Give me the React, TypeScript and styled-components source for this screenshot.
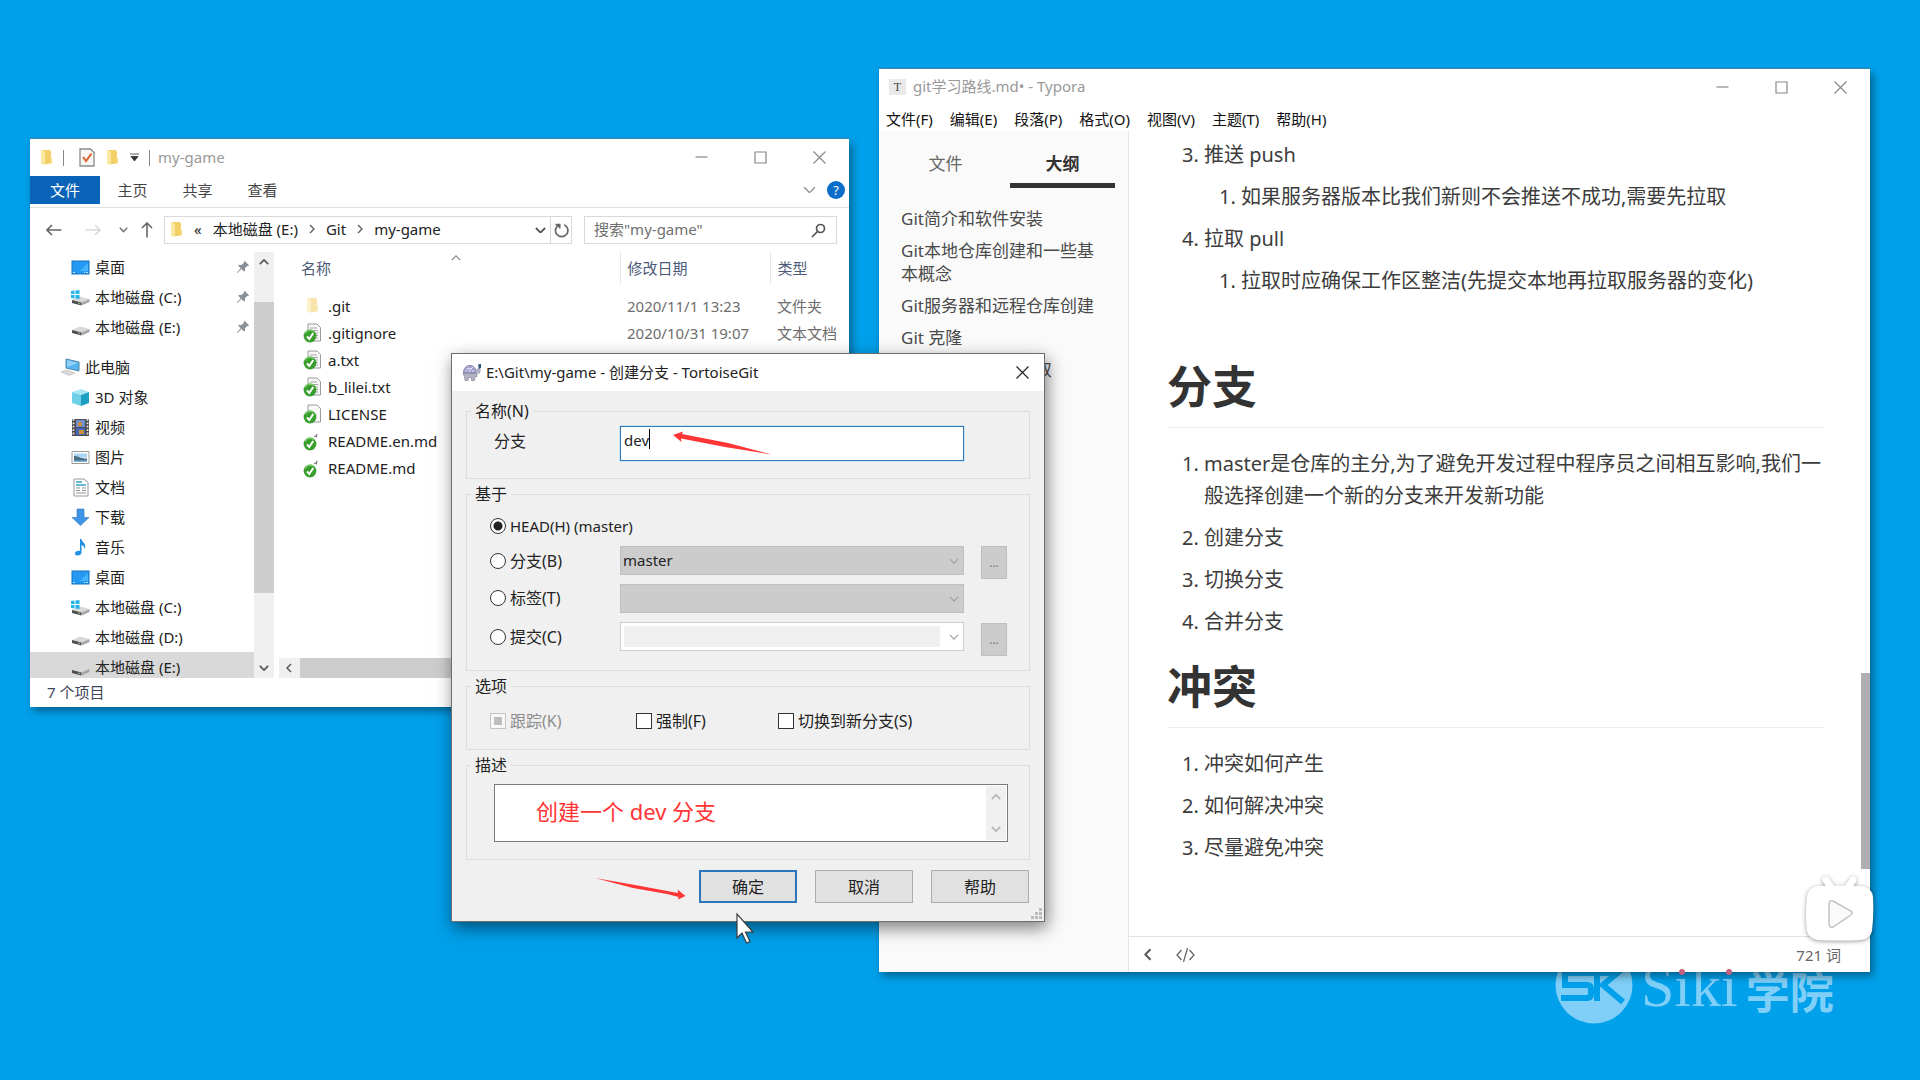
import React from "react";
import styled, { createGlobalStyle, css } from "styled-components";

const GlobalStyle = createGlobalStyle`
  *, *::before, *::after { box-sizing: border-box; }
  body { margin: 0; background: #00a0ea; }
  body, button, input, select, textarea {
    font-family: "Noto Sans", "Noto Sans CJK SC", sans-serif;
  }
  button { border: 0; padding: 0; background: none; color: inherit; }
  ul, ol, h1 { margin: 0; padding: 0; }
  a { color: inherit; text-decoration: none; }
`;

/* ---------- desktop ---------- */

const Desktop = styled.main`
  position: relative;
  min-height: 100vh;
  overflow: hidden;
  background: #00a0ea;
  font-size: 15px;
  line-height: 24px;
  color: #222;
`;

const Window = styled.section`
  position: absolute;
  display: flex;
  flex-direction: column;
  background: #fff;
  box-shadow: 0 -1px 0 #3b86ad, 3px 4px 8px rgba(0, 0, 0, 0.4);
`;

const ExplorerWindow = styled(Window)`
  left: 30px;
  top: 139px;
  width: 819px;
  height: 568px;
`;

const EditorWindow = styled(Window)`
  left: 879px;
  top: 69px;
  width: 991px;
  height: 903px;
`;

const DialogWindow = styled(Window)`
  left: 451px;
  top: 353px;
  width: 594px;
  background: #f0f0f0;
  border: 1px solid #6d6d6d;
  box-shadow: 2px 6px 16px rgba(0, 0, 0, 0.5);
`;

const TitleBar = styled.header<{ $height: number; $inset: number }>`
  display: flex;
  align-items: center;
  flex: none;
  height: ${(p) => p.$height}px;
  padding-left: ${(p) => p.$inset}px;
  background: #fff;
`;

const TitleText = styled.span<{ $dark?: boolean }>`
  flex: 1;
  padding-bottom: 2px;
  color: ${(p) => (p.$dark ? "#222" : "#999")};
`;

const Caption = styled.button<{ $dark?: boolean; $width?: number }>`
  display: grid;
  place-items: center;
  width: ${(p) => p.$width ?? 59}px;
  height: 100%;
  color: ${(p) => (p.$dark ? "#222" : "#888")};
`;

const CaptionIcon = ({ d, size = 13 }: { d: string; size?: number }) => (
  <svg width={size} height={size} viewBox="0 0 13 13" fill="none" stroke="currentColor" strokeWidth="1.2">
    <path d={d} />
  </svg>
);

const CROSS = "M.5.5l12 12M12.5.5l-12 12";

const CaptionButtons = () => (
  <>
    <Caption aria-label="最小化"><CaptionIcon d="M.5 6h12" /></Caption>
    <Caption aria-label="最大化"><CaptionIcon d="M1 1h11v11h-11z" /></Caption>
    <Caption aria-label="关闭"><CaptionIcon d={CROSS} /></Caption>
  </>
);

/* ---------- small drawings ---------- */

const chevrons = { up: "M1 6l5-5 5 5", down: "M1 1l5 5 5-5" };

const Chevron = ({ dir = "down", width = 10, color = "#555", stroke = 2 }: { dir?: "up" | "down"; width?: number; color?: string; stroke?: number }) => (
  <svg width={width} height={width * 0.6} viewBox="0 0 12 7" fill="none" stroke={color} strokeWidth={stroke}>
    <path d={chevrons[dir]} />
  </svg>
);

const SideChevron = ({ dir = "right", color = "#666", size = 10 }: { dir?: "left" | "right"; color?: string; size?: number }) => (
  <svg width={size * 0.6} height={size} viewBox="0 0 6 10" fill="none" stroke={color} strokeWidth="1.5">
    <path d={dir === "right" ? "M1 1l4 4-4 4" : "M5 1L1 5l4 4"} />
  </svg>
);

const FolderIcon = ({ pale }: { pale?: boolean }) => (
  <svg width="13" height="17" viewBox="0 0 13 17" opacity={pale ? 0.55 : 1}>
    <path d="M1 1h9l1 2v11l-3 1H1z" fill="#f3cf67" />
    <path d="M1 1l4 1.500v14l-4-2z" fill="#fbe7a2" />
    <path d="M10 9h2v5l-2 1z" fill="#f5d778" />
  </svg>
);

const PropertiesIcon = () => (
  <svg width="16" height="19" viewBox="0 0 16 19">
    <path d="M1 1h10.500l3.500 3.500V18H1z" fill="#faf7f5" stroke="#8b8b8b" strokeWidth="1.300" />
    <path d="M4 9l3 4 5.500-7.500" fill="none" stroke="#d9622b" strokeWidth="2" />
  </svg>
);

const DesktopIcon = () => (
  <svg width="19" height="19" viewBox="0 0 19 19">
    <rect x="1" y="3" width="17" height="13" fill="#2399f3" stroke="#1673b8" />
    <path d="M10 12l7-7v8h-9z" fill="#45b4fb" />
    <path d="M2 14.500h15" stroke="#bfe4ff" strokeDasharray="2 9 1 1" />
  </svg>
);

const DriveIcon = ({ system }: { system?: boolean }) => (
  <svg width="19" height="19" viewBox="0 0 19 19">
    <path d="M1 12l8-3.500 9.500 2.500-8 3.500z" fill="#d9d9d9" />
    <path d="M1 12l9.500 2.500v3L1 15z" fill="#4d4d4d" />
    <path d="M10.500 14.500l8-3.500v3l-8 3.500z" fill="#a5a5a5" />
    <circle cx="8" cy="15.200" r=".8" fill="#9fe09a" />
    {system && <path d="M0 3l3.500-.5v3.500H0zM4.500 2.400L8.500 2v4h-4zM0 7h3.500v3.500L0 10zM4.500 7h4v4l-4-.5z" fill="#25b3e8" />}
  </svg>
);

const ComputerIcon = () => (
  <svg width="20" height="19" viewBox="0 0 20 19">
    <path d="M6 1l13 3v9L6 10z" fill="#58b4ee" stroke="#4c86a8" />
    <path d="M7 2l11 3-11 4z" fill="#8fd0f7" />
    <path d="M1 14l6-2 8 3-6 2.500z" fill="#d8d8d8" stroke="#bbb" strokeWidth=".6" />
  </svg>
);

const CubeIcon = () => (
  <svg width="19" height="19" viewBox="0 0 19 19">
    <path d="M1 4l9-3 8 3-8 3z" fill="#a9e6f3" />
    <path d="M1 4l9 3v11l-9-3z" fill="#6fd1e8" />
    <path d="M10 7l8-3v11l-8 3z" fill="#1d9fc4" />
  </svg>
);

const VideoIcon = () => (
  <svg width="19" height="19" viewBox="0 0 19 19">
    <path d="M1 1h17v17H1z" fill="#4a4a4a" />
    <path d="M2.500 1v17M16.500 1v17" stroke="#e6e6e6" strokeWidth="1.800" strokeDasharray="1.800 1.600" />
    <path d="M5 2h9v7H5z" fill="#6f8fd6" /><path d="M5 10h9v7H5z" fill="#4568b8" />
    <path d="M7 4h4v4H7zM8 12h5v4H8z" fill="#c98f3c" />
  </svg>
);

const PictureIcon = () => (
  <svg width="19" height="19" viewBox="0 0 19 19">
    <path d="M1 3.500h17v12H1z" fill="#fff" stroke="#9a9a9a" />
    <path d="M3 5.500h13v4H3z" fill="#a9d3f2" />
    <path d="M3 8c4 0 6 2.500 13 2.500v3H3z" fill="#486f86" />
    <path d="M3 12.500h13v1H3z" fill="#6bb1dc" />
  </svg>
);

const DocumentIcon = () => (
  <svg width="19" height="19" viewBox="0 0 19 19">
    <path d="M3 1h10l4 3.500V18H3z" fill="#fff" stroke="#999" />
    <path d="M5 4h6M5 7h10" stroke="#3aa0c9" strokeWidth="1.400" />
    <path d="M5 10h4M5 12.500h4M5 15h10M11 10h4M11 12.500h4" stroke="#8d9499" />
  </svg>
);

const DownloadIcon = () => (
  <svg width="19" height="19" viewBox="0 0 19 19">
    <path d="M6 1h7v8.500h5L9.500 17.500 1 9.500h5z" fill="#3f95e6" stroke="#2b76c4" strokeWidth=".6" />
  </svg>
);

const MusicIcon = () => (
  <svg width="19" height="19" viewBox="0 0 19 19">
    <path d="M9 1h1.500c.3 3.500 5 4 3.500 10-.8-2.500-2-3.500-3.500-4v7.500c0 2-1.800 3-3.800 3S4 16.500 4 15.200c0-1.700 2.600-2.900 5-2.400z" fill="#1f8fe0" />
  </svg>
);

const PinIcon = () => (
  <svg width="14" height="14" viewBox="0 0 14 14" fill="#8a9097">
    <path d="M8.500.8l4.700 4.700-1.200.5-.8-.1-2.300 2.400.2 2.400-1 .9-2.700-2.700L1.500 13l-.6-.5L4.700 8.300 2.200 5.700l1-.9 2.300.2L8 2.800 7.900 1.600z" />
  </svg>
);

const FileIcon = ({ lined, bare }: { lined?: boolean; bare?: boolean }) => (
  <svg width="19" height="20" viewBox="0 0 19 20">
    {!bare && <path d="M5 1h9l3.500 3.500V18H5z" fill="#f8f8f8" stroke="#9b9b9b" />}
    {lined && <path d="M7 5h7M7 7.500h8M8 10h7M11 12.500h4M12 15h3" stroke="#a9a9a9" />}
    {bare && <path d="M13 6l1-3M11 5l3 1" stroke="#777" strokeWidth="1.300" />}
    <circle cx="7" cy="13" r="6.400" fill="#3a9e2f" />
    <path d="M2 10.500a6 6 0 0 1 9-2" stroke="#7acb6b" strokeWidth="1.500" fill="none" />
    <path d="M4 13.500l2.300 2.500 4-6" fill="none" stroke="#fff" strokeWidth="2" />
  </svg>
);

const TortoiseIcon = () => (
  <svg width="20" height="19" viewBox="0 0 20 19">
    <path d="M1.500 10c0-5 3-7.500 6.500-7.500s6 2.500 6.500 7.500z" fill="#a3a1cf" stroke="#77769c" strokeWidth=".8" />
    <path d="M4 8l2-3 3 1 2-2M7 9l2-3M10 9l2-2" stroke="#e6e5f5" fill="none" />
    <path d="M1 10.500h14v3h-2l-.5 4H9.500l-.5-3H6.500L6 17.500H3l-.5-4z" fill="#b4b3c6" stroke="#83829a" strokeWidth=".7" />
    <path d="M14 10l.5-4 2.500-1 2 2-1.500 4z" fill="#b0afc6" />
    <path d="M16 1.500l3-.5v4l-2 1z" fill="#2a4f70" />
  </svg>
);

/* ---------- explorer ---------- */

const QuickBar = styled.div`
  display: flex;
  align-items: center;
  gap: 10px;
  margin-right: 8px;
`;

const Rule = styled.span`
  width: 1px;
  height: 16px;
  background: #888;
`;

const QuickTools = styled.div`
  display: flex;
  align-items: center;
  gap: 11px;
  padding-left: 5px;
`;

const Ribbon = styled.nav`
  display: flex;
  align-items: center;
  flex: none;
  height: 32px;
  padding: 0 4px 4px 0;
  border-bottom: 1px solid #dfdfdf;
`;

const RibbonTab = styled.button<{ $active?: boolean }>`
  width: ${(p) => (p.$active ? 70 : 65)}px;
  height: 28px;
  font-size: 15px;
  color: ${(p) => (p.$active ? "#fff" : "#444")};
  background: ${(p) => (p.$active ? "#0a63b8" : "transparent")};
`;

const HelpBadge = styled.button`
  width: 18px;
  height: 18px;
  margin-left: 11px;
  border-radius: 50%;
  background: #0a6dc9;
  color: #fff;
  font-size: 13px;
  line-height: 18px;
`;

const Spacer = styled.span`
  flex: 1;
`;

const AddressRow = styled.div`
  display: flex;
  align-items: center;
  flex: none;
  height: 44px;
  padding: 0 12px 0 8px;
`;

const NavButton = styled.button<{ $width: number }>`
  display: grid;
  place-items: center;
  width: ${(p) => p.$width}px;
  height: 28px;
`;

const Field = styled.div`
  display: flex;
  align-items: center;
  height: 28px;
  border: 1px solid #d9d9d9;
  background: #fff;
`;

const Breadcrumb = styled(Field)`
  flex: 1;
  padding-left: 5px;
  color: #222;
`;

const Crumbs = styled.div`
  display: flex;
  align-items: center;
  flex: 1;
  gap: 11px;
  padding-bottom: 2px;
`;

const RefreshButton = styled.button`
  display: grid;
  place-items: center;
  width: 21px;
  height: 100%;
  margin-left: 4px;
  border-left: 1px solid #d9d9d9;
`;

const SearchField = styled(Field)`
  width: 253px;
  margin-left: 12px;
  padding: 0 10px 0 9px;
  input {
    flex: 1;
    min-width: 0;
    border: 0;
    padding: 0 0 2px;
    outline: 0;
    font-size: 15px;
    &::placeholder { color: #6f6f6f; opacity: 1; }
  }
`;

const ExplorerBody = styled.div`
  display: flex;
  flex: 1;
  min-height: 0;
`;

const Tree = styled.ul`
  width: 224px;
  overflow: hidden;
  list-style: none;
`;

const TreeItem = styled.li<{ $root?: boolean; $selected?: boolean }>`
  margin-top: ${(p) => (p.$root ? 10 : 0)}px;
  background: ${(p) => (p.$selected ? "#d9d9d9" : "transparent")};
  a {
    display: flex;
    align-items: center;
    gap: 5px;
    height: 30px;
    padding: 0 4px 0 ${(p) => (p.$root ? 30 : 41)}px;
  }
  span { flex: 1; }
`;

const VScroll = styled.div`
  display: flex;
  flex-direction: column;
  align-items: center;
  width: 20px;
  margin-right: 5px;
  padding: 7px 0;
  background: #f0f0f0;
`;

const VThumb = styled.span`
  flex: none;
  width: 100%;
  height: 291px;
  margin-top: 37px;
  background: #cdcdcd;
`;

const FilePane = styled.div`
  display: flex;
  flex: 1;
  flex-direction: column;
  min-width: 0;
`;

const FileTable = styled.table`
  width: 100%;
  table-layout: fixed;
  border-collapse: collapse;
  th, td { padding: 0 0 0 7px; text-align: left; font-weight: 400; white-space: nowrap; }
  thead th {
    position: relative;
    height: 32px;
    color: #4c5a78;
    border-right: 1px solid #e6e6e6;
  }
  thead th:last-child { border-right: 0; }
  thead th:first-child, tbody td:first-child { padding-left: 22px; }
  tbody td { height: 27px; color: #6d6d6d; }
  tbody::before { content: ""; display: block; height: 8px; }
  tbody td:first-child { color: #222; }
`;

const SortMark = styled.span`
  position: absolute;
  top: -9px;
  left: 172px;
`;

const FileName = styled.span`
  display: flex;
  align-items: center;
  gap: 5px;
`;

const FileIconBox = styled.span`
  display: grid;
  place-items: center;
  width: 22px;
  height: 20px;
`;

const HScroll = styled.div`
  display: flex;
  align-items: center;
  height: 20px;
  margin-top: auto;
  padding-left: 7px;
  background: #f0f0f0;
  &::after {
    content: "";
    flex: 1;
    height: 100%;
    margin-left: 8px;
    background: #cdcdcd;
  }
`;

const ExplorerStatus = styled.footer`
  display: flex;
  align-items: center;
  flex: none;
  height: 29px;
  padding: 0 17px 2px;
  color: #3d4658;
`;

type Node = { label: string; icon: React.ReactNode; pinned?: boolean; root?: boolean; selected?: boolean };

const tree: Node[] = [
  { label: "桌面", icon: <DesktopIcon />, pinned: true },
  { label: "本地磁盘 (C:)", icon: <DriveIcon system />, pinned: true },
  { label: "本地磁盘 (E:)", icon: <DriveIcon />, pinned: true },
  { label: "此电脑", icon: <ComputerIcon />, root: true },
  { label: "3D 对象", icon: <CubeIcon /> },
  { label: "视频", icon: <VideoIcon /> },
  { label: "图片", icon: <PictureIcon /> },
  { label: "文档", icon: <DocumentIcon /> },
  { label: "下载", icon: <DownloadIcon /> },
  { label: "音乐", icon: <MusicIcon /> },
  { label: "桌面", icon: <DesktopIcon /> },
  { label: "本地磁盘 (C:)", icon: <DriveIcon system /> },
  { label: "本地磁盘 (D:)", icon: <DriveIcon /> },
  { label: "本地磁盘 (E:)", icon: <DriveIcon />, selected: true },
];

const files = [
  { name: ".git", icon: <FolderIcon pale />, date: "2020/11/1 13:23", kind: "文件夹" },
  { name: ".gitignore", icon: <FileIcon lined />, date: "2020/10/31 19:07", kind: "文本文档" },
  { name: "a.txt", icon: <FileIcon lined /> },
  { name: "b_lilei.txt", icon: <FileIcon lined /> },
  { name: "LICENSE", icon: <FileIcon /> },
  { name: "README.en.md", icon: <FileIcon bare /> },
  { name: "README.md", icon: <FileIcon bare /> },
];

const Explorer = () => (
  <ExplorerWindow aria-label="my-game">
    <TitleBar $height={37} $inset={10}>
      <QuickBar>
        <FolderIcon />
        <Rule />
        <QuickTools>
          <PropertiesIcon />
          <FolderIcon />
          <svg width="9" height="9" viewBox="0 0 9 9"><path d="M0 1h9M1 3.500h7L4.500 8z" fill="#333" stroke="#333" strokeWidth=".8" /></svg>
        </QuickTools>
        <Rule />
      </QuickBar>
      <TitleText>my-game</TitleText>
      <CaptionButtons />
    </TitleBar>
    <Ribbon>
      <RibbonTab $active>文件</RibbonTab>
      <RibbonTab>主页</RibbonTab>
      <RibbonTab>共享</RibbonTab>
      <RibbonTab>查看</RibbonTab>
      <Spacer />
      <Chevron width={13} color="#8a8a8a" stroke={1.2} />
      <HelpBadge aria-label="帮助">?</HelpBadge>
    </Ribbon>
    <AddressRow>
      <NavButton $width={31} aria-label="后退">
        <svg width="16" height="12" viewBox="0 0 16 12" fill="none" stroke="#666" strokeWidth="1.600"><path d="M1 6h14.500M6 1L1 6l5 5" /></svg>
      </NavButton>
      <NavButton $width={47} aria-label="前进">
        <svg width="16" height="12" viewBox="0 0 16 12" fill="none" stroke="#d8d8d8" strokeWidth="1.600"><path d="M15 6H.5M10 1l5 5-5 5" /></svg>
      </NavButton>
      <NavButton $width={14} aria-label="最近位置"><Chevron width={9} color="#777" /></NavButton>
      <NavButton $width={34} aria-label="向上">
        <svg width="12" height="16" viewBox="0 0 12 16" fill="none" stroke="#666" strokeWidth="1.600"><path d="M6 1v14.500M1 6l5-5 5 5" /></svg>
      </NavButton>
      <Breadcrumb>
        <Crumbs>
          <FolderIcon />
          <span>«</span>
          <span>本地磁盘 (E:)</span>
          <SideChevron />
          <span>Git</span>
          <SideChevron />
          <span>my-game</span>
        </Crumbs>
        <Chevron width={11} color="#555" />
        <RefreshButton aria-label="刷新">
          <svg width="15" height="15" viewBox="0 0 15 15" fill="none" stroke="#666" strokeWidth="1.700"><path d="M10.200 1.800a6.200 6.200 0 1 1-5 0M1.500 1.600h4.200v4" /></svg>
        </RefreshButton>
      </Breadcrumb>
      <SearchField>
        <input aria-label="搜索" placeholder={'搜索"my-game"'} />
        <svg width="15" height="15" viewBox="0 0 15 15" fill="none" stroke="#555" strokeWidth="1.700"><circle cx="9.500" cy="5.500" r="4" /><path d="M6.500 8.500L1 14" /></svg>
      </SearchField>
    </AddressRow>
    <ExplorerBody>
      <Tree>
        {tree.map((n, i) => (
          <TreeItem key={i} $root={n.root} $selected={n.selected}>
            <a href="#">{n.icon}<span>{n.label}</span>{n.pinned && <PinIcon />}</a>
          </TreeItem>
        ))}
      </Tree>
      <VScroll>
        <Chevron dir="up" width={10} />
        <VThumb />
        <Spacer />
        <Chevron width={10} />
      </VScroll>
      <FilePane>
        <FileTable>
          <colgroup><col style={{ width: 341 }} /><col style={{ width: 150 }} /><col /></colgroup>
          <thead>
            <tr>
              <th>名称<SortMark><Chevron dir="up" width={10} color="#888" stroke={1.500} /></SortMark></th>
              <th>修改日期</th>
              <th>类型</th>
            </tr>
          </thead>
          <tbody>
            {files.map((f) => (
              <tr key={f.name}>
                <td><FileName><FileIconBox>{f.icon}</FileIconBox>{f.name}</FileName></td>
                <td>{f.date}</td>
                <td>{f.kind}</td>
              </tr>
            ))}
          </tbody>
        </FileTable>
        <HScroll><SideChevron dir="left" color="#555" /></HScroll>
      </FilePane>
    </ExplorerBody>
    <ExplorerStatus>7 个项目</ExplorerStatus>
  </ExplorerWindow>
);

/* ---------- markdown editor ---------- */

const AppIcon = styled.span`
  width: 17px;
  height: 16px;
  margin-right: 7px;
  background: #e9e9e9;
  color: #444;
  font: 12px/16px "Liberation Serif", serif;
  text-align: center;
`;

const MenuBar = styled.nav`
  display: flex;
  align-items: center;
  flex: none;
  gap: 17px;
  height: 26px;
  padding: 2px 7px 0;
`;

const MenuItem = styled.button`
  font-size: 15px;
  line-height: 22px;
  color: #111;
`;

const EditorBody = styled.div`
  display: flex;
  flex: 1;
  min-height: 0;
`;

const Sidebar = styled.aside`
  width: 250px;
  border-right: 1px solid #e4e4e4;
  background: #fafafa;
  font-size: 17px;
  line-height: 23px;
  color: #4a4a4a;
`;

const SideTabs = styled.div`
  display: grid;
  grid-template-columns: 1fr 1fr;
  gap: 12px;
  padding: 0 13px 0 14px;
`;

const SideTab = styled.button<{ $active?: boolean }>`
  height: 57px;
  padding-top: 10px;
  border-bottom: 5px solid ${(p) => (p.$active ? "#333" : "transparent")};
  font-size: 17px;
  font-weight: ${(p) => (p.$active ? 700 : 400)};
  color: ${(p) => (p.$active ? "#333" : "#666")};
`;

const Outline = styled.ul`
  display: flex;
  flex-direction: column;
  gap: 9px;
  padding: 19px 21px 0 22px;
  list-style: none;
`;

const Page = styled.div`
  display: flex;
  flex: 1;
  flex-direction: column;
  min-width: 0;
`;

const Scroller = styled.div`
  display: flex;
  flex: 1;
`;

const Article = styled.article`
  flex: 1;
  padding: 8px 37px 0 38px;
  font-size: 20px;
  line-height: 32px;
  color: #3c3c3c;
`;

const Heading = styled.h1`
  margin: 21px 0 20px;
  padding-bottom: 12px;
  border-bottom: 1px solid #eee;
  font-size: 45px;
  line-height: 56px;
  font-weight: 700;
  color: #333;
`;

const NumberList = styled.ol`
  display: flex;
  flex-direction: column;
  gap: 10px;
  padding-left: 37px;
  & & { padding: 10px 0 0 37px; }
`;

const BlankLine = styled.div`
  height: 41px;
`;

const PageScroll = styled.div`
  width: 9px;
  padding-top: 542px;
  &::before {
    content: "";
    display: block;
    height: 196px;
    background: #b0aeb0;
  }
`;

const EditorStatus = styled.footer`
  display: flex;
  align-items: center;
  flex: none;
  gap: 24px;
  height: 36px;
  padding: 0 29px 0 15px;
  border-top: 1px solid #e2e2e2;
  color: #666;
  button { display: grid; }
`;

const menus = ["文件(F)", "编辑(E)", "段落(P)", "格式(O)", "视图(V)", "主题(T)", "帮助(H)"];
const outline = ["Git简介和软件安装", "Git本地仓库创建和一些基本概念", "Git服务器和远程仓库创建", "Git 克隆", "Git 提交 推送和拉取"];

const Editor = () => (
  <EditorWindow aria-label="Typora">
    <TitleBar $height={36} $inset={10}>
      <AppIcon>T</AppIcon>
      <TitleText>git学习路线.md• - Typora</TitleText>
      <CaptionButtons />
    </TitleBar>
    <MenuBar>{menus.map((m) => <MenuItem key={m}>{m}</MenuItem>)}</MenuBar>
    <EditorBody>
      <Sidebar>
        <SideTabs>
          <SideTab>文件</SideTab>
          <SideTab $active>大纲</SideTab>
        </SideTabs>
        <Outline>{outline.map((o) => <li key={o}><a href="#">{o}</a></li>)}</Outline>
      </Sidebar>
      <Page>
        <Scroller>
          <Article>
            <NumberList start={3}>
              <li>推送 push<NumberList><li>如果服务器版本比我们新则不会推送不成功,需要先拉取</li></NumberList></li>
              <li>拉取 pull<NumberList><li>拉取时应确保工作区整洁(先提交本地再拉取服务器的变化)</li></NumberList></li>
            </NumberList>
            <BlankLine />
            <Heading>分支</Heading>
            <NumberList>
              <li>master是仓库的主分,为了避免开发过程中程序员之间相互影响,我们一般选择创建一个新的分支来开发新功能</li>
              <li>创建分支</li>
              <li>切换分支</li>
              <li>合并分支</li>
            </NumberList>
            <Heading>冲突</Heading>
            <NumberList>
              <li>冲突如何产生</li>
              <li>如何解决冲突</li>
              <li>尽量避免冲突</li>
            </NumberList>
          </Article>
          <PageScroll />
        </Scroller>
        <EditorStatus>
          <button aria-label="收起侧栏"><SideChevron dir="left" color="#555" size={13} /></button>
          <button aria-label="源代码模式">
            <svg width="19" height="14" viewBox="0 0 19 14" fill="none" stroke="#666" strokeWidth="1.300"><path d="M5.500 2L1 7l4.500 5M13.500 2L18 7l-4.500 5M11.500 0l-4 14" /></svg>
          </button>
          <Spacer />
          <span>721 词</span>
        </EditorStatus>
      </Page>
    </EditorBody>
  </EditorWindow>
);

/* ---------- create-branch dialog ---------- */

const Form = styled.form`
  display: flex;
  flex-direction: column;
  gap: 5px;
  padding: 10px 14px 18px;
  font-size: 16px;
`;

const Group = styled.fieldset<{ $pad: string }>`
  min-width: 0;
  margin: 0;
  padding: ${(p) => p.$pad};
  border: 1px solid #dcdcdc;
  legend {
    margin-left: ${(p) => (p.$pad.endsWith("27px") ? -23 : -19)}px;
    padding: 0 4px;
    line-height: 20px;
  }
`;

const FormGrid = styled.div<{ $rows: string }>`
  display: grid;
  grid-template-columns: 130px minmax(0, 1fr) 26px;
  grid-template-rows: ${(p) => p.$rows};
  align-items: center;
`;

const NameLabel = styled.label`
  padding: 0 0 6px 4px;
`;

const NameBox = styled.div`
  position: relative;
  margin-right: 17px;
  input {
    display: block;
    width: 100%;
    height: 35px;
    padding: 0 3px 8px;
    border: 1px solid #2f78b8;
    outline: 1px solid #cde6f7;
    background: #fff;
    font-size: 15px;
    color: #222;
  }
`;

const Caret = styled.span`
  position: absolute;
  top: 3px;
  left: 29px;
  width: 1px;
  height: 20px;
  background: #000;
`;

const Choice = styled.label<{ $disabled?: boolean; $compact?: boolean }>`
  display: flex;
  align-items: center;
  gap: 4px;
  font-size: ${(p) => (p.$compact ? 15 : 16)}px;
  white-space: nowrap;
  color: ${(p) => (p.$disabled ? "#8d8d8d" : "inherit")};
  input {
    appearance: none;
    flex: none;
    width: 16px;
    height: 16px;
    margin: 0;
    border: 1px solid ${(p) => (p.$disabled ? "#c4c4c4" : "#333")};
    background: #fff;
  }
  input[type="radio"] { border-radius: 50%; }
  input[type="radio"]:checked { background: radial-gradient(circle, #222 4px, #fff 5px); }
  input:disabled { background: linear-gradient(#bdbdbd, #bdbdbd) center / 8px 8px no-repeat #f8f8f8; }
`;

const Combo = styled.div<{ $editable?: boolean }>`
  position: relative;
  margin-right: 17px;
  select {
    display: block;
    appearance: none;
    width: 100%;
    height: 29px;
    padding: 0 3px 2px 2px;
    border: 1px solid ${(p) => (p.$editable ? "#d0d0d0" : "#bfbfbf")};
    border-radius: 0;
    font-size: 15px;
    color: #222;
    opacity: 1;
    ${(p) =>
      p.$editable
        ? css`background: linear-gradient(#f0f0f0, #f0f0f0) 3px 3px / calc(100% - 26px) calc(100% - 6px) no-repeat #fff;`
        : css`background: #ccc;`}
  }
  svg { position: absolute; right: 5px; top: 12px; }
`;

const BrowseButton = styled.button`
  align-self: end;
  height: 33px;
  border: 1px solid #bfbfbf;
  background: #ccc;
  color: #777;
  font-size: 12px;
`;

const Options = styled.div`
  display: grid;
  grid-template-columns: 146px 142px auto;
  height: 24px;
  align-items: center;
`;

const MessageBox = styled.div`
  display: flex;
  height: 58px;
  border: 1px solid #7a7a7a;
  background: #fff;
  textarea {
    flex: 1;
    border: 0;
    outline: 0;
    resize: none;
    overflow: hidden;
    padding: 10px 0 0 41px;
    background: transparent;
    color: #ff3535;
    font-size: 22px;
    line-height: 32px;
  }
`;

const MessageScroll = styled.div`
  display: flex;
  flex-direction: column;
  align-items: center;
  justify-content: space-between;
  width: 20px;
  margin: 1px;
  padding: 8px 0;
  background: #f0f0f0;
`;

const Actions = styled.div`
  display: flex;
  justify-content: flex-end;
  gap: 18px;
  padding: 5px 1px 0 0;
`;

const ActionButton = styled.button<{ $primary?: boolean }>`
  width: 98px;
  height: 33px;
  padding-bottom: 2px;
  border: ${(p) => (p.$primary ? "2px solid #2b76bb" : "1px solid #adadad")};
  background: #e1e1e1;
  font-size: 16px;
`;

const Grip = styled.svg`
  position: absolute;
  right: 2px;
  bottom: 2px;
`;

const DialogTitle = styled(TitleText)`
  margin-left: 4px;
`;

const GRIP_DOTS = [[8, 0], [4, 4], [8, 4], [0, 8], [4, 8], [8, 8]];

const ComboMark = () => <Chevron width={10} color="#a0a0a0" stroke={1.4} />;

const BranchDialog = () => (
  <DialogWindow role="dialog" aria-label="创建分支">
    <TitleBar $height={37} $inset={10}>
      <TortoiseIcon />
      <DialogTitle $dark>E:\Git\my-game - 创建分支 - TortoiseGit</DialogTitle>
      <Caption $dark $width={43} aria-label="关闭"><CaptionIcon d={CROSS} /></Caption>
    </TitleBar>
    <Form onSubmit={(e) => e.preventDefault()}>
      <Group $pad="5px 22px 17px 23px">
        <legend>名称(N)</legend>
        <FormGrid $rows="35px">
          <NameLabel htmlFor="branch-name">分支</NameLabel>
          <NameBox>
            <input id="branch-name" defaultValue="dev" />
            <Caret />
          </NameBox>
        </FormGrid>
      </Group>
      <Group $pad="5px 22px 14px 23px">
        <legend>基于</legend>
        <FormGrid $rows="33px 37px 38px 39px">
          <Choice $compact><input type="radio" name="base" defaultChecked />HEAD(H) (master)</Choice>
          <span /><span />
          <Choice><input type="radio" name="base" />分支(B)</Choice>
          <Combo><select aria-label="分支" disabled><option>master</option></select><ComboMark /></Combo>
          <BrowseButton type="button">...</BrowseButton>
          <Choice><input type="radio" name="base" />标签(T)</Choice>
          <Combo><select aria-label="标签" disabled /><ComboMark /></Combo>
          <span />
          <Choice><input type="radio" name="base" />提交(C)</Choice>
          <Combo $editable><select aria-label="提交" disabled /><ComboMark /></Combo>
          <BrowseButton type="button">...</BrowseButton>
        </FormGrid>
      </Group>
      <Group $pad="13px 22px 16px 23px">
        <legend>选项</legend>
        <Options>
          <Choice $disabled><input type="checkbox" disabled />跟踪(K)</Choice>
          <Choice><input type="checkbox" />强制(F)</Choice>
          <Choice><input type="checkbox" />切换到新分支(S)</Choice>
        </Options>
      </Group>
      <Group $pad="9px 21px 17px 27px">
        <legend>描述</legend>
        <MessageBox>
          <textarea aria-label="描述" defaultValue="创建一个 dev 分支" />
          <MessageScroll>
            <Chevron dir="up" width={10} color="#b5b5b5" />
            <Chevron width={10} color="#b5b5b5" />
          </MessageScroll>
        </MessageBox>
      </Group>
      <Actions>
        <ActionButton $primary>确定</ActionButton>
        <ActionButton type="button">取消</ActionButton>
        <ActionButton type="button">帮助</ActionButton>
      </Actions>
    </Form>
    <Grip width="11" height="11" viewBox="0 0 11 11" fill="#bcbcbc">
      {GRIP_DOTS.map(([x, y]) => <rect key={`${x}-${y}`} x={x} y={y} width="3" height="3" />)}
    </Grip>
  </DialogWindow>
);

/* ---------- marks lying over the desktop ---------- */

const Overlay = styled.svg<{ $x: number; $y: number }>`
  position: absolute;
  left: ${(p) => p.$x}px;
  top: ${(p) => p.$y}px;
  overflow: visible;
  pointer-events: none;
`;

const Watermark = styled.div`
  position: absolute;
  left: 1555px;
  top: 946px;
  display: flex;
  align-items: flex-end;
  gap: 8px;
  height: 78px;
  color: #7fcff8;
`;

const WatermarkLatin = styled.span`
  padding-bottom: 8px;
  font: 60px/60px "Liberation Serif", serif;
`;

const WatermarkHan = styled.span`
  padding-bottom: 12px;
  font: 700 44px/44px "Noto Sans CJK SC", sans-serif;
`;

const App = () => (
  <>
    <GlobalStyle />
    <Desktop>
      <Watermark>
        <svg width="78" height="78" viewBox="0 0 78 78">
          <circle cx="39" cy="39" r="38.500" fill="#7fcff8" />
          <path d="M64 27H10v12h22q4 0 4 4v5q0 4-4 4H6M42 30v25M66 24L48 39l20 17" fill="none" stroke="#00a0ea" strokeWidth="6" />
        </svg>
        <WatermarkLatin>Siki</WatermarkLatin>
        <WatermarkHan>学院</WatermarkHan>
      </Watermark>
      <Editor />
      <Explorer />
      <BranchDialog />
      <Overlay $x={1679} $y={969} width="60" height="6" fill="#c4607f">
        <circle cx="3" cy="3" r="3" /><circle cx="50" cy="3" r="3" />
      </Overlay>
      <Overlay $x={673} $y={429} width="100" height="26" viewBox="0 0 100 26" fill="#ff3535">
        <path d="M0 6L10 2.500 9 5 55 14l44 11.500L52 18 8 9.500l.5 3.500z" />
      </Overlay>
      <Overlay $x={595} $y={877} width="92" height="24" viewBox="0 0 92 24" fill="#ff3535">
        <path d="M0 1l40 7 43 8-.5-3.500L90.500 19 83 22.500l.5-2.500L72 17 38 11z" />
      </Overlay>
      <Overlay $x={736} $y={913} width="18" height="32" viewBox="0 0 18 32">
        <path d="M1 1v24l5-5 4.500 10 3.500-1.500L9.500 19H17z" fill="#fff" stroke="#3a3a3a" strokeWidth="1.200" />
      </Overlay>
      <Overlay $x={1804} $y={876} width="72" height="68" viewBox="0 0 72 68">
        <g style={{ filter: "drop-shadow(0 1px 2px rgba(0,0,0,.4))" }}>
          <path d="M22 4l6 9M49 4l-6 9" stroke="#fff" strokeWidth="7" strokeLinecap="round" />
          <path d="M14 10Q36 9 57 10q11 1 12 11 1 17-1 34-2 8-11 9-22 1-43 0-9-1-11-9-2-17 0-34 1-10 11-11z" fill="#fff" />
        </g>
        <path d="M25 28q0-4 4-3l18 10q2 2 0 4L29 51q-4 1-4-3z" fill="#fafafa" stroke="#c2c2c2" strokeWidth="1.500" />
      </Overlay>
    </Desktop>
  </>
);

export default App;
